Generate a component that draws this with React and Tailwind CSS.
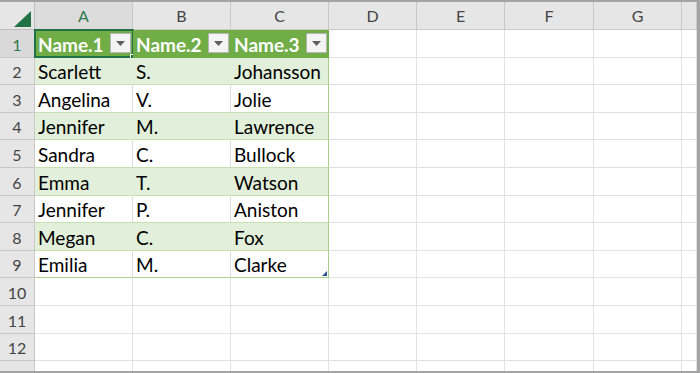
import React from "react";

const data = [
  ["Scarlett", "S.", "Johansson"],
  ["Angelina", "V.", "Jolie"],
  ["Jennifer", "M.", "Lawrence"],
  ["Sandra", "C.", "Bullock"],
  ["Emma", "T.", "Watson"],
  ["Jennifer", "P.", "Aniston"],
  ["Megan", "C.", "Fox"],
  ["Emilia", "M.", "Clarke"],
];

const cols = ["A", "B", "C", "D", "E", "F", "G", ""];

function DropBtn() {
  return (
    <div className="absolute right-[2px] top-[3px] w-[21px] h-[20px] bg-[#f4f4f4] border border-[#b4b4b4] flex items-center justify-center">
      <svg width="9" height="5" viewBox="0 0 9 5">
        <path d="M0 0 L9 0 L4.5 5 Z" fill="#5f5f5f" />
      </svg>
    </div>
  );
}

function HeaderCell({ children, selected }) {
  return (
    <div
      className={
        "border-r border-b border-[#c9c9c9] flex items-center justify-center text-[16px] " +
        (selected ? "bg-[#dcdcdc] text-[#2f7a4e]" : "bg-[#e6e6e6] text-[#444444]")
      }
    >
      {children}
    </div>
  );
}

function RowHead({ n, selected }) {
  return (
    <div
      className={
        "border-r border-b border-[#c9c9c9] flex items-end justify-center pb-[2px] text-[16px] leading-[20px] " +
        (selected ? "bg-[#d9d9d9] text-[#2f7a4e]" : "bg-[#e6e6e6] text-[#444444]")
      }
    >
      {n}
    </div>
  );
}

export default function App() {
  const rows = [];
  for (let r = 1; r <= 13; r++) {
    const cells = [];
    cells.push(<RowHead key="h" n={r} selected={r === 1} />);
    for (let c = 0; c < 8; c++) {
      const key = c;
      if (r === 1 && c < 3) {
        cells.push(
          <div
            key={key}
            className="relative bg-[#70ad47] border-b border-[#70ad47] flex items-end pl-[3px] pb-[2px] text-white font-bold text-[19px] leading-[20px]"
          >
            <span>{"Name." + (c + 1)}</span>
            <DropBtn />
            {c === 0 && (
              <>
                <div className="absolute -left-[1px] -top-[1px] -right-[1px] -bottom-[1px] border-2 border-[#217346]" />
                <div className="absolute -right-[4px] -bottom-[4px] w-[7px] h-[7px] bg-[#217346] border border-white" />
              </>
            )}
          </div>
        );
      } else if (r >= 2 && r <= 9 && c < 3) {
        const band = r % 2 === 0;
        cells.push(
          <div
            key={key}
            className={
              "relative flex items-end pl-[3px] pb-[2px] text-[19px] leading-[20px] text-black border-b border-[#c6e0b4] " +
              (band ? "bg-[#e2efda] " : "bg-white ") +
              (c === 2
                ? "border-r border-r-[#a9d08e]"
                : band
                ? "border-r border-r-[#e2efda]"
                : "border-r border-r-[#dcdcdc]") +
              (r === 9 ? " border-b-[#a9d08e]" : "")
            }
          >
            <span>{data[r - 2][c]}</span>
            {r === 9 && c === 2 && (
              <svg className="absolute right-[1px] bottom-[1px]" width="5" height="5" viewBox="0 0 5 5">
                <path d="M5 0 L5 5 L0 5 Z" fill="#2f5597" />
              </svg>
            )}
          </div>
        );
      } else {
        cells.push(
          <div
            key={key}
            className={
              "bg-white border-b border-r border-[#e1e1e1]" +
              (r === 1 && c < 3 ? "" : "")
            }
          />
        );
      }
    }
    rows.push(<React.Fragment key={r}>{cells}</React.Fragment>);
  }

  return (
    <div
      className="w-[700px] h-[373px] overflow-hidden bg-white border-t-2 border-r-[3px] border-b-2 border-[#a3a3a3]"
      style={{ fontFamily: "Lato, 'Liberation Sans', sans-serif" }}
    >
      <div className="grid grid-cols-[35px_98px_98px_98px_88px_88px_89px_88px_1fr] grid-rows-[28px_repeat(13,27.6px)]">
        <div className="bg-[#e6e6e6] border-r border-b border-[#bdbdbd] relative">
          <svg className="absolute left-[14px] top-[9px]" width="17" height="16" viewBox="0 0 17 16">
            <path d="M17 0 L17 16 L0 16 Z" fill="#217346" />
          </svg>
        </div>
        {cols.map((c, i) => (
          <HeaderCell key={i} selected={i === 0}>
            {c}
          </HeaderCell>
        ))}
        {rows}
      </div>
    </div>
  );
}
